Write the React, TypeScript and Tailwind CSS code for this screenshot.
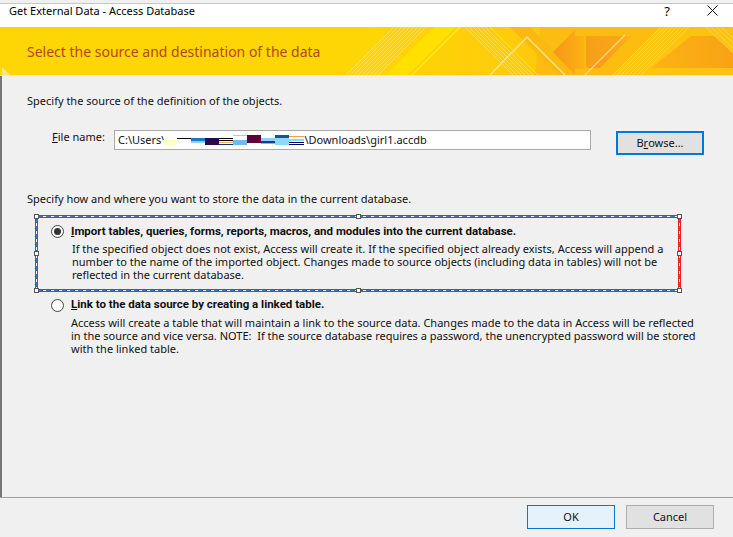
import React from "react";

const font = { fontFamily: '"Noto Sans", sans-serif' };
const bold = { fontFamily: 'Roboto, sans-serif' };

function Banner() {
  return (
    <svg className="absolute inset-0" width="733" height="48" viewBox="0 0 733 48">
      <defs>
        <linearGradient id="bg" x1="0" y1="0" x2="1" y2="0">
          <stop offset="0" stopColor="#ffd605" />
          <stop offset="0.5" stopColor="#ffd605" />
          <stop offset="0.75" stopColor="#fdc90c" />
          <stop offset="1" stopColor="#fcc20f" />
        </linearGradient>
        <linearGradient id="arrow" x1="0" y1="0" x2="1" y2="0">
          <stop offset="0" stopColor="#f7951a" />
          <stop offset="1" stopColor="#fbb212" />
        </linearGradient>
        <linearGradient id="trap" x1="0" y1="0" x2="1" y2="0">
          <stop offset="0" stopColor="#fbb414" />
          <stop offset="1" stopColor="#f9a214" />
        </linearGradient>
      </defs>
      <rect width="733" height="48" fill="url(#bg)" />
      <polygon points="386,48 408,48 456,0 434,0" fill="#ffe000" />
      <polygon points="540,0 660,0 612,48 535,48" fill="#fcbc10" />
      <polygon points="510,0 530,0 578,48 558,48" fill="#fbb810" />
      <g stroke="#ffe066" strokeWidth="1" opacity="0.8">
        <line x1="346" y1="48" x2="394" y2="0" />
        <line x1="350" y1="48" x2="398" y2="0" />
        <line x1="354" y1="48" x2="402" y2="0" />
        <line x1="358" y1="48" x2="406" y2="0" />
        <line x1="362" y1="48" x2="410" y2="0" />
        <line x1="366" y1="48" x2="414" y2="0" />
        <line x1="370" y1="48" x2="418" y2="0" />
        <line x1="374" y1="48" x2="422" y2="0" />
        <line x1="378" y1="48" x2="426" y2="0" />
      </g>
      <line x1="412" y1="48" x2="460" y2="0" stroke="#ffe91a" strokeWidth="1.5" />
      <g stroke="#fde27a" strokeWidth="1" opacity="0.7">
        <line x1="465" y1="0" x2="513" y2="48" />
        <line x1="469" y1="0" x2="517" y2="48" />
        <line x1="473" y1="0" x2="521" y2="48" />
        <line x1="477" y1="0" x2="525" y2="48" />
        <line x1="481" y1="0" x2="529" y2="48" />
        <line x1="485" y1="0" x2="533" y2="48" />
        <line x1="490" y1="0" x2="538" y2="48" />
      </g>
      <polyline points="490,48 527,10 565,48" fill="none" stroke="#fde48a" strokeWidth="1.5" />
      <polygon points="553,25 575,3 575,9 584,9 584,42 575,42 575,48" fill="url(#arrow)" />
      <polygon points="586,9 632,9 600,41 586,41" fill="url(#arrow)" />
      <polygon points="586,9 622,9 590,41 586,41" fill="#f7a51a" opacity="0.6" />
      <line x1="585" y1="48" x2="625" y2="8" stroke="#fdd98a" strokeWidth="1.2" />
      <polygon points="651,41 691,9 714,9 733,25 733,41" fill="url(#trap)" />
      <g stroke="#fdd65a" strokeWidth="1" opacity="0.85">
        <line x1="613" y1="48" x2="661" y2="0" />
        <line x1="617" y1="48" x2="665" y2="0" />
        <line x1="621" y1="48" x2="669" y2="0" />
        <line x1="625" y1="48" x2="673" y2="0" />
        <line x1="629" y1="48" x2="677" y2="0" />
        <line x1="633" y1="48" x2="681" y2="0" />
        <line x1="637" y1="48" x2="685" y2="0" />
        <line x1="641" y1="48" x2="689" y2="0" />
        <line x1="706" y1="0" x2="733" y2="26" />
        <line x1="711" y1="0" x2="733" y2="21" />
        <line x1="716" y1="0" x2="733" y2="16" />
        <line x1="721" y1="0" x2="733" y2="11" />
      </g>
      <polygon points="2,40 10,48 2,48" fill="#ffe680" />
    </svg>
  );
}

function Redaction() {
  return (
    <svg width="141" height="10" viewBox="0 0 141 10" className="shrink-0 -ml-[2px]">
      <rect x="0" y="5" width="14" height="5" fill="#ffffc8" />
      <rect x="14" y="3" width="14" height="1" fill="#000000" />
      <rect x="28" y="3" width="14" height="3" fill="#1c78c8" />
      <rect x="28" y="6" width="14" height="2" fill="#90d0f8" />
      <rect x="42" y="3" width="14" height="7" fill="#2a0a50" />
      <rect x="56" y="3" width="14" height="1" fill="#000000" />
      <rect x="56" y="5" width="14" height="1" fill="#000000" />
      <rect x="56" y="7" width="14" height="1" fill="#f0b060" />
      <rect x="56" y="9" width="14" height="1" fill="#103860" />
      <rect x="70" y="0" width="14" height="1" fill="#90e0c0" />
      <rect x="70" y="5" width="14" height="5" fill="#70b8f0" />
      <rect x="84" y="0" width="14" height="8" fill="#60003a" />
      <rect x="98" y="3" width="14" height="3" fill="#90d0f8" />
      <rect x="98" y="6" width="14" height="2" fill="#0a4090" />
      <rect x="98" y="8" width="14" height="1" fill="#f0a040" />
      <rect x="112" y="0" width="14" height="3" fill="#0a5a90" />
      <rect x="112" y="3" width="14" height="7" fill="#90d8f8" />
      <rect x="126" y="1" width="15" height="1" fill="#f0a040" />
      <rect x="126" y="4" width="15" height="2" fill="#90d8f8" />
      <rect x="126" y="7" width="15" height="1" fill="#000060" />
      <rect x="126" y="9" width="15" height="1" fill="#000060" />
    </svg>
  );
}

function Radio({ on }: { on?: boolean }) {
  return (
    <span className="w-[13px] h-[13px] rounded-full border border-[#444444] bg-white flex items-center justify-center shrink-0">
      {on && <span className="w-[7px] h-[7px] rounded-full bg-[#333333]" />}
    </span>
  );
}

function Handle({ className }: { className: string }) {
  return <span className={"absolute w-[5px] h-[5px] bg-white border border-[#555555] " + className} />;
}

const dashH = "absolute left-0 right-0 h-px bg-[repeating-linear-gradient(90deg,#3b73c8_0,#3b73c8_5px,#ffffff_5px,#ffffff_8px)]";
const dashV = "absolute top-0 bottom-0 w-px bg-[repeating-linear-gradient(180deg,#3b73c8_0,#3b73c8_5px,#ffffff_5px,#ffffff_8px)]";

export default function App() {
  return (
    <div className="w-[733px] h-[537px] bg-[#f0f0f0] overflow-hidden flex flex-col text-[11px] text-[#111111]" style={font}>
      <div className="h-[3px] bg-[#f0f0f0] shrink-0" />
      <div className="h-px bg-[#c8c8cc] shrink-0" />
      <div className="h-[23px] bg-white flex items-start pl-[9px] pr-[15px] shrink-0 justify-between">
        <span className="text-[11px] leading-[14px] text-black">Get External Data - Access Database</span>
        <div className="flex items-start gap-[37px] pt-[1px]">
          <span className="text-[13px] leading-[12px] text-black">?</span>
          <svg width="11" height="11" viewBox="0 0 11 11">
            <path d="M0.5 0.5 L10.5 10.5 M10.5 0.5 L0.5 10.5" stroke="#111111" strokeWidth="1" fill="none" />
          </svg>
        </div>
      </div>
      <div className="h-[49px] relative shrink-0 border-b border-[#e8e8e8] flex items-center pl-[27px]">
        <Banner />
        <span className="relative text-[14px] text-[#b5460f]">Select the source and destination of the data</span>
      </div>

      <div className="flex-1 flex flex-col border-l-2 border-[#777777] pl-[25px] pr-[19px]">
        <div className="mt-[16px] h-[18px] leading-[18px]">Specify the source of the definition of the objects.</div>

        <div className="mt-[20px] flex items-start">
          <span className="ml-[25px] w-[62px] leading-[14px]"><u>F</u>ile name:</span>
          <div className="w-[477px] h-[20px] border border-[#a9a9a9] bg-white flex items-center pl-[3px] text-[11px]">
            <span>C:\Users\</span>
            <Redaction />
            <span>\Downloads\girl1.accdb</span>
          </div>
          <button className="ml-[25px] mt-[1px] w-[88px] h-[24px] border-2 border-[#0078d7] bg-[#e1e1e1] flex items-center justify-center text-[11px]">
            B<u>r</u>owse...
          </button>
        </div>

        <div className="mt-[35px] h-[18px] leading-[18px]">Specify how and where you want to store the data in the current database.</div>

        <div className="relative ml-[8px] mt-[7px] w-[646px] h-[77px] border-3 border-[#ee1c25]">
          <span className={dashH + " -top-[2px]"} />
          <span className={dashH + " -bottom-[2px]"} />
          <span className={dashV + " -left-[2px]"} />
          <span className={dashV + " -right-[2px]"} />
          <Handle className="-left-[4px] -top-[4px]" />
          <Handle className="left-[318px] -top-[4px]" />
          <Handle className="-right-[4px] -top-[4px]" />
          <Handle className="-left-[4px] top-[33px]" />
          <Handle className="-right-[4px] top-[33px]" />
          <Handle className="-left-[4px] -bottom-[4px]" />
          <Handle className="left-[318px] -bottom-[4px]" />
          <Handle className="-right-[4px] -bottom-[4px]" />
          <div className="flex items-center gap-[7px] pl-[13px] pt-[3px] h-[24px]">
            <Radio on />
            <span className="font-bold text-[11.5px]" style={bold}><u>I</u>mport tables, queries, forms, reports, macros, and modules into the current database.</span>
          </div>
          <div className="pl-[34px] leading-[13px] whitespace-nowrap">
            <div>If the specified object does not exist, Access will create it. If the specified object already exists, Access will append a</div>
            <div>number to the name of the imported object. Changes made to source objects (including data in tables) will not be</div>
            <div>reflected in the current database.</div>
          </div>
        </div>

        <div className="flex items-center gap-[7px] ml-[24px] mt-[5px] h-[16px]">
          <Radio />
          <span className="font-bold text-[11.5px]" style={bold}><u>L</u>ink to the data source by creating a linked table.</span>
        </div>
        <div className="ml-[44px] mt-[3px] leading-[13px] whitespace-nowrap">
          <div>Access will create a table that will maintain a link to the source data. Changes made to the data in Access will be reflected</div>
          <div>in the source and vice versa. NOTE:&nbsp; If the source database requires a password, the unencrypted password will be stored</div>
          <div>with the linked table.</div>
        </div>
      </div>

      <div className="h-[40px] shrink-0 border-t border-[#a0a0a0] flex items-start justify-end gap-[11px] pt-[7px] pr-[19px]">
        <button className="w-[88px] h-[24px] border border-[#0078d7] bg-[#e5f1fb] text-[11px]">OK</button>
        <button className="w-[88px] h-[24px] border border-[#adadad] bg-[#e1e1e1] text-[11px]">Cancel</button>
      </div>
    </div>
  );
}
